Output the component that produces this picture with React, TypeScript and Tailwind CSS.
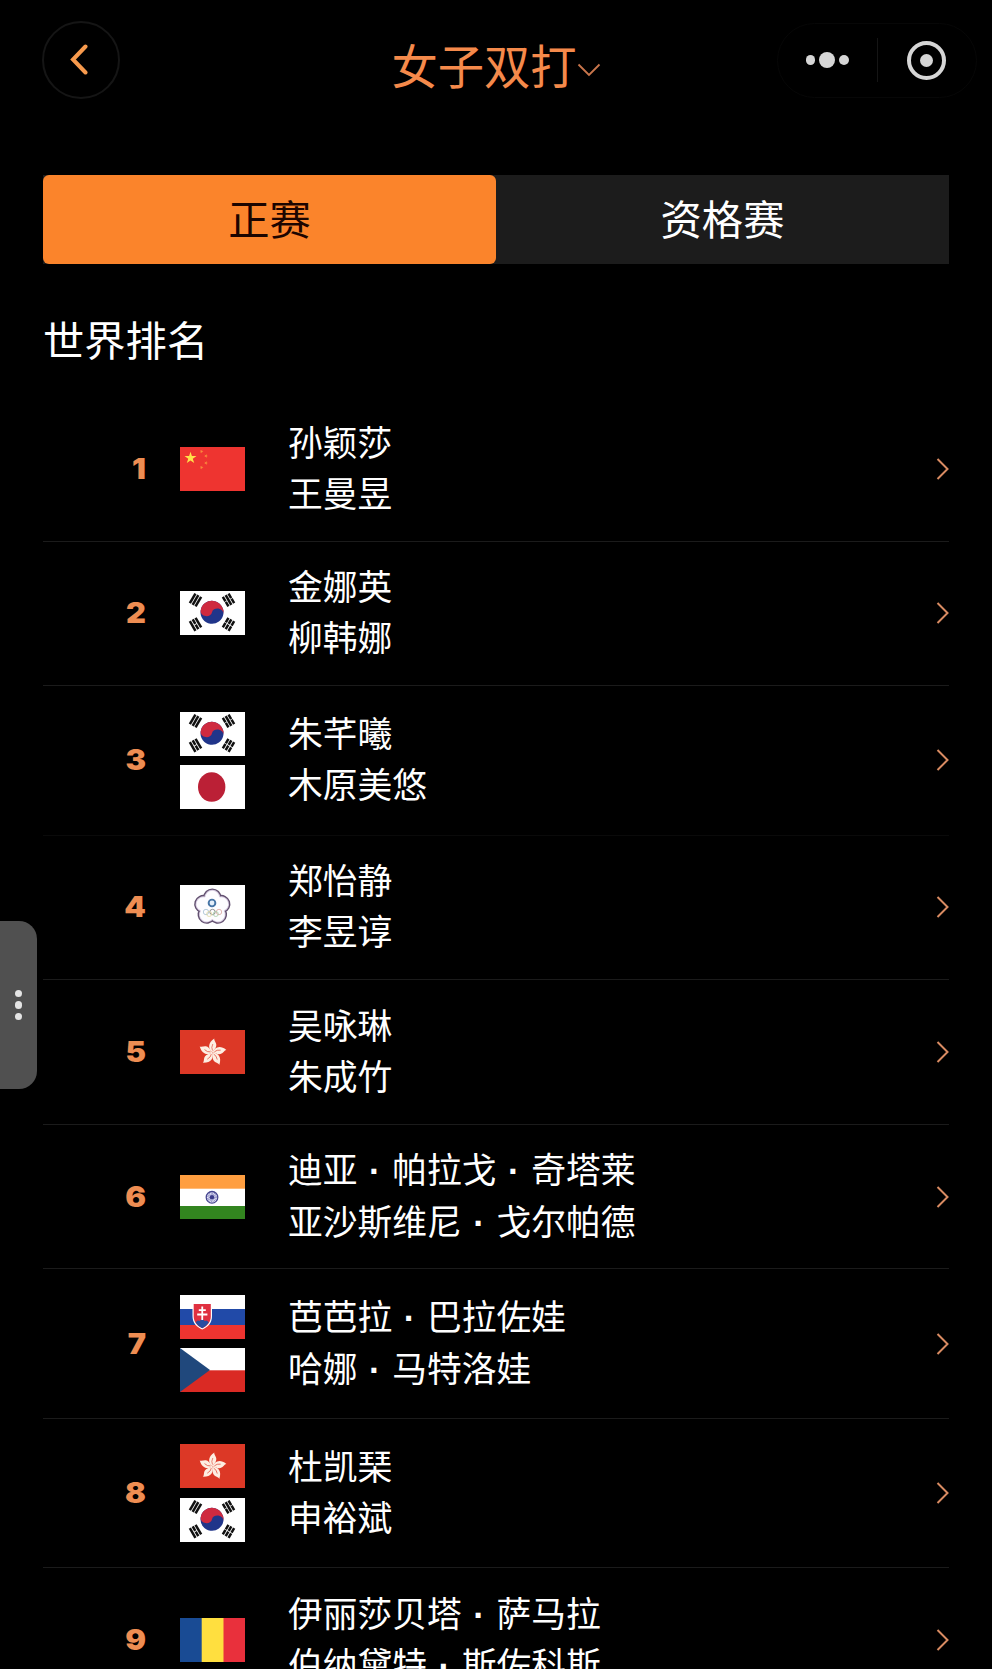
import React, { useState } from 'react';

type Country = 'CHN' | 'KOR' | 'JPN' | 'TPE' | 'HKG' | 'IND' | 'SVK' | 'CZE' | 'ROU';

interface Pair {
  rank: number;
  flags: Country[];
  players: [string, string];
}

const pairs: Pair[] = [
  { rank: 1, flags: ['CHN'], players: ['孙颖莎', '王曼昱'] },
  { rank: 2, flags: ['KOR'], players: ['金娜英', '柳韩娜'] },
  { rank: 3, flags: ['KOR', 'JPN'], players: ['朱芊曦', '木原美悠'] },
  { rank: 4, flags: ['TPE'], players: ['郑怡静', '李昱谆'] },
  { rank: 5, flags: ['HKG'], players: ['吴咏琳', '朱成竹'] },
  { rank: 6, flags: ['IND'], players: ['迪亚·帕拉戈·奇塔莱', '亚沙斯维尼·戈尔帕德'] },
  { rank: 7, flags: ['SVK', 'CZE'], players: ['芭芭拉·巴拉佐娃', '哈娜·马特洛娃'] },
  { rank: 8, flags: ['HKG', 'KOR'], players: ['杜凯琹', '申裕斌'] },
  { rank: 9, flags: ['ROU'], players: ['伊丽莎贝塔·萨马拉', '伯纳黛特·斯佐科斯'] },
];

const STAR = '0,-1 0.225,-0.309 0.951,-0.309 0.363,0.118 0.588,0.809 0,0.382 -0.588,0.809 -0.363,0.118 -0.951,-0.309 -0.225,-0.309';

const Trigram = ({ x, y, angle, broken }: { x: number; y: number; angle: number; broken: boolean[] }) => (
  <g transform={`translate(${x} ${y}) rotate(${angle})`} stroke="#111" strokeWidth="2.5">
    {broken.map((b, i) => (
      <path key={i} d={b ? `M-5.6 ${(i - 1) * 3.3}h5.2M0.4 ${(i - 1) * 3.3}h5.2` : `M-5.6 ${(i - 1) * 3.3}h11.2`} />
    ))}
  </g>
);

const PETALS = [0, 72, 144, 216, 288];

const flagArt: Record<Country, React.ReactNode> = {
  CHN: (
    <>
      <rect width="65" height="44" fill="#ee3430" />
      <polygon points={STAR} transform="translate(10.5 11) scale(6.3)" fill="#ffe04a" />
      {[[21.5, 4.5], [26, 9], [26, 16], [21.5, 20.5]].map(([x, y]) => (
        <polygon key={y} points={STAR} transform={`translate(${x} ${y}) rotate(20) scale(2)`} fill="#f98a3c" />
      ))}
    </>
  ),
  KOR: (
    <>
      <rect width="65" height="44" fill="#fff" />
      <g transform="rotate(8 32 21.3)">
        <circle cx="32" cy="21.3" r="11.5" fill="#20358a" />
        <path d="M20.5 21.3a11.5 11.5 0 0 1 23 0a5.75 4.6 0 0 0-11.5 0a5.75 4.6 0 0 1-11.5 0z" fill="#cf2a40" />
      </g>
      <Trigram x={15.5} y={9} angle={-60} broken={[false, false, false]} />
      <Trigram x={48.5} y={9} angle={60} broken={[true, false, true]} />
      <Trigram x={15.5} y={33.3} angle={60} broken={[false, true, false]} />
      <Trigram x={48.5} y={33.3} angle={-60} broken={[true, true, true]} />
    </>
  ),
  JPN: (
    <>
      <rect width="65" height="44" fill="#fff" />
      <ellipse cx="31.7" cy="22" rx="13.7" ry="14.7" fill="#bb2036" />
    </>
  ),
  TPE: (
    <>
      <rect width="65" height="44" fill="#fff" />
      <g transform="translate(32.3 22)">
        {PETALS.map((a) => (
          <circle key={a} cy="-9.4" r="9.2" transform={`rotate(${a})`} fill="#62506f" />
        ))}
        {PETALS.map((a) => (
          <circle key={a} cy="-9.4" r="7.8" transform={`rotate(${a})`} fill="#d6cbe0" />
        ))}
        {PETALS.map((a) => (
          <circle key={a} cy="-9.4" r="6.9" transform={`rotate(${a})`} fill="#fdfcff" />
        ))}
        <circle r="12" fill="#fdfcff" />
      </g>
      <circle cx="32" cy="18" r="4.3" fill="#4674a6" />
      <circle cx="32" cy="18" r="2.4" fill="#e4eefa" />
      <g fill="none" strokeWidth="0.8">
        <circle cx="26" cy="27" r="2.7" stroke="#a6bfd2" />
        <circle cx="32.5" cy="27" r="2.7" stroke="#777" />
        <circle cx="39" cy="27" r="2.7" stroke="#d9a6a0" />
        <circle cx="29.2" cy="29" r="2.5" stroke="#e0d7a0" />
        <circle cx="35.8" cy="29" r="2.5" stroke="#a4cda4" />
      </g>
    </>
  ),
  HKG: (
    <>
      <rect width="65" height="44" fill="#dc3826" />
      <g transform="translate(32.5 22.5)">
        {PETALS.map((a) => (
          <g key={a} transform={`rotate(${a})`}>
            <path d="M0 0C-4.5 -3.5 -5 -9.5 1.8 -14C1.2 -11.5 5 -9.5 3.5 -5.5C2.8 -3.5 1 -2.5 0 0Z" fill="#fdeee2" />
            <path d="M0 -2Q-1.5 -5 0.3 -8.5" fill="none" stroke="#dc3826" strokeWidth="0.6" />
          </g>
        ))}
      </g>
    </>
  ),
  IND: (
    <>
      <rect width="65" height="44" fill="#fff" />
      <rect width="65" height="13.7" fill="#ff9e40" />
      <rect y="31" width="65" height="13" fill="#32851f" />
      <circle cx="32" cy="22.3" r="5.8" fill="#eef" stroke="#45458f" strokeWidth="1.3" />
      <circle cx="32" cy="22.3" r="3.6" fill="none" stroke="#8585bb" strokeWidth="2.8" strokeDasharray="0.7 0.7" />
      <circle cx="32" cy="22.3" r="2.3" fill="#3c3c8a" />
    </>
  ),
  SVK: (
    <>
      <rect width="65" height="44" fill="#fff" />
      <rect y="14" width="65" height="16" fill="#214aa8" />
      <rect y="30" width="65" height="14" fill="#ee3430" />
      <path d="M12.5 9h19.5v12c0 7-4 11-9.75 13.5c-5.75-2.5-9.75-6.5-9.75-13.5z" fill="#fff" />
      <path d="M13.7 9h17.1v12.2c0 6-3.5 9.5-8.55 12c-5.05-2.5-8.55-6-8.55-12z" fill="#e03040" />
      <path d="M15.6 27.5q2-3 4-1.5q2.6-3.5 5.2 0q2-1.5 4 1.5q-2.5 3.7-6.6 5.7q-4.1-2-6.6-5.7z" fill="#2a4da0" />
      <path d="M22.25 11.5v13.5M18.8 15.2h7M17.2 19.5h10.2" stroke="#fff" strokeWidth="1.8" />
    </>
  ),
  CZE: (
    <>
      <rect width="65" height="44" fill="#fff" />
      <rect y="22.3" width="65" height="21.7" fill="#da2a24" />
      <polygon points="0,0 30,22 0,44" fill="#20487c" />
    </>
  ),
  ROU: (
    <>
      <rect width="65" height="44" fill="#ffdf3f" />
      <rect width="21.7" height="44" fill="#194b94" />
      <rect x="43.5" width="21.5" height="44" fill="#e9303c" />
    </>
  ),
};

const Flag = ({ country }: { country: Country }) => (
  <svg className="block h-11 w-[65px]" viewBox="0 0 65 44">
    {flagArt[country]}
  </svg>
);

const Header = () => (
  <header className="grid h-[120px] grid-cols-[1fr_auto_1fr] items-center px-[15px]">
    <button className="ml-[27px] flex h-[78px] w-[78px] items-center justify-center rounded-full border-2 border-[#151515]">
      <svg className="mr-1 h-8 w-5" viewBox="0 0 20 32" fill="none" stroke="#f79a4d" strokeWidth="4">
        <path d="M16.5 2.5L4 15.5L16.5 28.5" strokeLinecap="round" />
      </svg>
    </button>

    <button className="mt-2 flex items-center text-[46.3px] leading-none text-[#f58a4b]">
      女子双打
      <svg className="mt-3 h-3.5 w-6" viewBox="0 0 24 14" fill="none" stroke="#c9764c" strokeWidth="1.8">
        <path d="M1.5 1.5L12 12L22.5 1.5" />
      </svg>
    </button>

    <div className="flex h-[75px] w-[200px] items-center justify-self-end rounded-full border border-[#070707]">
      <div className="flex flex-1 items-center justify-center gap-1">
        <span className="h-[9.5px] w-[9.5px] rounded-full bg-[#d6d6d6]" />
        <span className="h-4 w-4 rounded-full bg-[#d6d6d6]" />
        <span className="h-[9.5px] w-[9.5px] rounded-full bg-[#d6d6d6]" />
      </div>
      <div className="h-11 w-px bg-[#151515]" />
      <div className="flex flex-1 items-center justify-center">
        <span className="flex h-[39px] w-[39px] items-center justify-center rounded-full border-[4.5px] border-[#d6d6d6]">
          <span className="h-[13px] w-[13px] rounded-full bg-[#d6d6d6]" />
        </span>
      </div>
    </div>
  </header>
);

// The separator takes a full character cell, like the hanzi around it
const PlayerName = ({ name }: { name: string }) => (
  <div>
    {name.split('·').map((part, i) => (
      <React.Fragment key={i}>
        {i > 0 && (
          <span className="inline-block w-[1em] text-center font-['Liberation_Sans',sans-serif] leading-none font-bold">·</span>
        )}
        {part}
      </React.Fragment>
    ))}
  </div>
);

const PairRow = ({ pair }: { pair: Pair }) => (
  <li className="flex items-center border-b border-[#1b1b1b] py-[20.5px] nth-3:border-[#0a0a0a]">
    <span className="w-[103px] origin-right scale-x-110 text-right font-['Inter'] text-[28px] leading-none font-black text-[#ee8d52]">
      {pair.rank}
    </span>
    <div className="my-[5px] ml-[34px] flex flex-col gap-[9.5px]">
      {pair.flags.map((country) => (
        <Flag key={country} country={country} />
      ))}
    </div>
    <div className="-mt-0.5 ml-[43px] flex-1 pb-0.5 text-[34.75px] leading-[51.3px] whitespace-nowrap text-white">
      {pair.players.map((name) => (
        <PlayerName key={name} name={name} />
      ))}
    </div>
    <svg className="h-[22px] w-3.5" viewBox="0 0 14 22" fill="none" stroke="#d98b62" strokeWidth="2">
      <path d="M2.5 1L12.5 11L2.5 21" />
    </svg>
  </li>
);

const App = () => {
  const [tab, setTab] = useState<'main' | 'qualifying'>('main');

  const tabClass = (active: boolean) =>
    active
      ? 'flex-1 rounded-md bg-[#fb842b] pb-1 text-[#1c0500]'
      : 'flex-1 pb-1 text-white';

  return (
    <div className="h-[1669px] w-[992px] overflow-hidden bg-black font-['Noto_Sans_CJK_SC',sans-serif]">
      <Header />

      <div className="mx-[43px] mt-[55px] flex h-[89px] bg-[#1c1c1c] text-[41.3px] leading-none">
        <button className={tabClass(tab === 'main')} onClick={() => setTab('main')}>
          正赛
        </button>
        <button className={tabClass(tab === 'qualifying')} onClick={() => setTab('qualifying')}>
          资格赛
        </button>
      </div>

      <h2 className="mx-[43px] mt-[47px] h-[86px] text-[41.3px] leading-[55px] font-normal text-white">世界排名</h2>

      <ul className="mx-[43px]">
        {pairs.map((pair) => (
          <PairRow key={pair.rank} pair={pair} />
        ))}
      </ul>

      <div className="absolute top-[921px] left-0 flex h-[168px] w-[37px] flex-col items-center justify-center gap-1 rounded-r-[18px] bg-[#505050]">
        <span className="h-[7.5px] w-[7.5px] rounded-full bg-[#e4e4e4]" />
        <span className="h-[7.5px] w-[7.5px] rounded-full bg-[#e4e4e4]" />
        <span className="h-[7.5px] w-[7.5px] rounded-full bg-[#e4e4e4]" />
      </div>
    </div>
  );
};

export default App;
